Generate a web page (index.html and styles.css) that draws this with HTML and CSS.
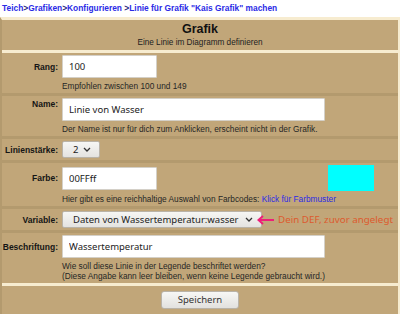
FILE: index.html
```html
<!DOCTYPE html>
<html lang="de">
<head>
    <meta charset="UTF-8">
    <title>Grafik - Linie definieren</title>
    <link rel="stylesheet" href="styles.css">
</head>
<body>
    <!-- Navigation -->
    <div class="crumbs">
        <a href="#">Teich</a>&gt;<a href="#">Grafiken</a>&gt;<a href="#">Konfigurieren</a> &gt;<a href="#">Linie für Grafik "Kais Grafik" machen</a>
    </div>

    <form class="panel">
        <div class="head">
            <h1>Grafik</h1>
            <p>Eine Linie im Diagramm definieren</p>
        </div>

        <div class="row">
            <label class="label">Rang:</label>
            <div class="line"><input type="text" class="text short" value="100"></div>
            <div class="hint">Empfohlen zwischen 100 und 149</div>
        </div>

        <div class="row">
            <label class="label top">Name:</label>
            <div class="line"><input type="text" class="text long" value="Linie von Wasser"></div>
            <div class="hint">Der Name ist nur für dich zum Anklicken, erscheint nicht in der Grafik.</div>
        </div>

        <div class="row">
            <label class="label">Linienstärke:</label>
            <div class="line">
                <span class="select small">2
                    <svg class="chev" width="8" height="5" viewBox="0 0 8 5"><polyline points="1,1 4,4 7,1" fill="none" stroke="#333" stroke-width="1.3"/></svg>
                </span>
            </div>
        </div>

        <div class="row">
            <label class="label">Farbe:</label>
            <div class="line">
                <input type="text" class="text short" value="00FFff">
                <span class="swatch"></span>
            </div>
            <div class="hint">Hier gibt es eine reichhaltige Auswahl von Farbcodes: <a href="#">Klick für Farbmuster</a></div>
        </div>

        <div class="row">
            <label class="label">Variable:</label>
            <div class="line">
                <span class="select wide">Daten von Wassertemperatur:wasser
                    <svg class="chev" width="8" height="5" viewBox="0 0 8 5"><polyline points="1,1 4,4 7,1" fill="none" stroke="#333" stroke-width="1.3"/></svg>
                </span>
                <svg class="arrow" width="18" height="10" viewBox="0 0 18 10"><line x1="2" y1="5" x2="17" y2="5" stroke="#ee1f78" stroke-width="2"/><polyline points="6,1 1.5,5 6,9" fill="none" stroke="#ee1f78" stroke-width="2"/></svg>
                <span class="note">Dein DEF, zuvor angelegt</span>
            </div>
        </div>

        <div class="row">
            <label class="label">Beschriftung:</label>
            <div class="line"><input type="text" class="text long" value="Wassertemperatur"></div>
            <div class="hint">Wie soll diese Linie in der Legende beschriftet werden?<br>(Diese Angabe kann leer bleiben, wenn keine Legende gebraucht wird.)</div>
        </div>

        <div class="foot">
            <button type="button">Speichern</button>
        </div>
    </form>
</body>
</html>
```

FILE: styles.css
```css
body {
    margin: 0;
    font-family: "Liberation Sans", Arial, sans-serif;
    background: #ffffff;
    color: #222;
}

.crumbs {
    height: 17px;
    line-height: 17px;
    padding-left: 2px;
    font-size: 8.4px;
    font-weight: bold;
    color: #1c1c7a;
    white-space: nowrap;
}

.crumbs a {
    color: #2b2be6;
    text-decoration: none;
}

.panel {
    margin: 0;
    background: #c1a679;
    border-top: 3px solid #f7ecd0;
    border-right: 2px solid #f7ecd0;
    border-left: 2px solid #b39a6e;
    height: 294px;
}

.head {
    text-align: center;
    padding: 2px 0;
    border-bottom: 3px solid #f7ecd0;
}

.head h1 {
    margin: 0;
    font-size: 12.5px;
    line-height: 14px;
    color: #111;
}

.head p {
    margin: 2px 0 0;
    font-size: 8.2px;
    line-height: 10px;
    color: #222;
}

/* eine Zeile im Formular */
.row {
    display: grid;
    grid-template-columns: 60px 1fr;
    align-items: center;
    padding: 2px 0;
}

.row + .row {
    border-top: 3px solid #b39a6e;
}

.label {
    grid-column: 1;
    grid-row: 1;
    text-align: right;
    padding-right: 4px;
    font-size: 8.5px;
    font-weight: bold;
    line-height: 10px;
    color: #151515;
}

.label.top {
    align-self: start;
    padding-top: 1px;
}

.line {
    grid-column: 2;
    grid-row: 1;
    display: flex;
    align-items: center;
}

.hint {
    grid-column: 2;
    margin-top: 3px;
    font-size: 8.3px;
    line-height: 10px;
    color: #262626;
    white-space: nowrap;
}

.hint a {
    color: #2b2be6;
    text-decoration: none;
}

input.text {
    box-sizing: border-box;
    height: 23px;
    margin: 0;
    padding: 0 6px;
    border: 1px solid #d4d0c8;
    border-radius: 1px;
    background: #fff;
    font-family: "Noto Sans", "Open Sans", sans-serif;
    font-size: 9.5px;
    color: #222;
    outline: none;
}

.short {
    width: 95px;
}

.long {
    width: 263px;
}

.select {
    box-sizing: border-box;
    height: 17px;
    display: inline-flex;
    align-items: center;
    justify-content: space-between;
    padding: 0 8px 0 10px;
    border: 1px solid #b9b3a8;
    border-radius: 2px;
    background: linear-gradient(#f6f6f4, #e4e3e0);
    font-family: "Noto Sans", "Open Sans", sans-serif;
    font-size: 9.5px;
    color: #222;
}

.select.small {
    width: 38px;
}

.select.wide {
    width: 200px;
}

.swatch {
    width: 46px;
    height: 26px;
    margin-left: 171px;
    background: #00ffff;
}

.arrow {
    margin-left: -5px;
}

.note {
    margin-left: 3px;
    font-family: "Noto Sans", "Open Sans", sans-serif;
    font-size: 9.8px;
    color: #dd5a2e;
}

.foot {
    border-top: 3px solid #f7ecd0;
    padding-top: 3px;
    text-align: center;
}

.foot button {
    width: 78px;
    height: 18px;
    padding: 0;
    border: 1px solid #b9b3a8;
    border-radius: 3px;
    background: linear-gradient(#f7f7f5, #e2e1de);
    font-family: "Noto Sans", "Open Sans", sans-serif;
    font-size: 9.5px;
    color: #333;
}
```
